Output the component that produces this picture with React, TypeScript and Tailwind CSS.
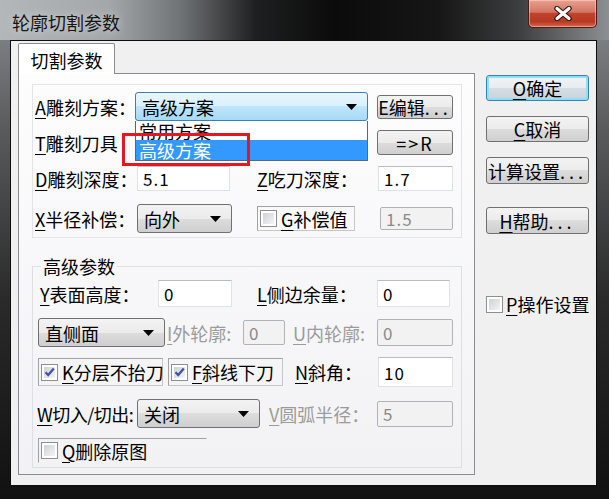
import React from "react";

const Acc = ({ k }: { k: string }) => (
  <span className="underline decoration-1 underline-offset-[3px]">{k}</span>
);

const Arrow = () => (
  <svg width="11" height="6" viewBox="0 0 11 6" className="shrink-0">
    <path d="M0 0h11L5.5 6z" fill="#000" />
  </svg>
);

const CheckBox = ({ checked }: { checked?: boolean }) => (
  <span className="flex h-[17px] w-[17px] shrink-0 items-center justify-center border border-[#8e8f8f] bg-white p-[2px]">
    <span className="flex h-full w-full items-center justify-center bg-[linear-gradient(135deg,#cfd1d3,#f4f4f4)]">
      {checked && (
        <svg width="11" height="10" viewBox="0 0 11 10">
          <path d="M1.5 5.2 4.2 8 9.8 1.5" fill="none" stroke="#3b53a0" strokeWidth="2.2" />
        </svg>
      )}
    </span>
  </span>
);

const grayBtn =
  "bg-[linear-gradient(to_bottom,#f3f3f3_0%,#ebebeb_50%,#dddddd_50%,#cfcfcf_100%)] border-[#707070]";

const Btn = ({ className, children, def }: { className: string; children: React.ReactNode; def?: boolean }) => (
  <div
    className={
      "flex items-center justify-center overflow-hidden whitespace-nowrap rounded-[3px] border " +
      (def
        ? "border-[#3c7fb1] bg-[linear-gradient(to_bottom,#f1f4f6_0%,#e7ecef_50%,#d5dee4_50%,#c9d3da_100%)] shadow-[inset_0_0_0_2px_#8fe0f7] "
        : grayBtn + " ") +
      className
    }
  >
    {children}
  </div>
);

const Dots = () => <span className="tracking-[4px]">...</span>;

const Input = ({ className, value, disabled }: { className: string; value: string; disabled?: boolean }) => (
  <div
    className={
      "flex items-center pl-[5px] text-[17px] " +
      (disabled
        ? "rounded-[2px] border border-[#b0b3b6] bg-[#f2f2f3] text-[#8a8a8a] "
        : "border border-[#dfe2e7] border-t-[#b9bcc2] bg-white text-black ") +
      className
    }
  >
    <span className="tracking-[1px]">{value}</span>
  </div>
);

const Combo = ({ className, text, focused }: { className: string; text: string; focused?: boolean }) => (
  <div
    className={
      "flex items-center justify-between rounded-[3px] border pl-[6px] pr-[10px] " +
      (focused
        ? "border-[#3c7fb1] bg-[linear-gradient(to_bottom,#eaf6fd_0%,#d9f0fc_50%,#bee6fd_50%,#a7d9f5_100%)] "
        : grayBtn + " ") +
      className
    }
  >
    <span>{text}</span>
    <Arrow />
  </div>
);

const Label = ({ k, text, className, disabled }: { k: string; text: string; className: string; disabled?: boolean }) => (
  <div className={"flex items-center whitespace-nowrap " + (disabled ? "text-[#9b9b9b] " : "text-black ") + className}>
    <Acc k={k} />
    {text}
  </div>
);

const CheckGroup = ({ k, text, checked, className }: { k: string; text: string; checked?: boolean; className: string }) => (
  <div
    className={
      "flex items-center gap-[4px] whitespace-nowrap border border-[#c6c6c6] border-l-[#a2a2a2] border-t-[#a2a2a2] pl-[2px] " +
      className
    }
  >
    <CheckBox checked={checked} />
    <span>
      <Acc k={k} />
      {text}
    </span>
  </div>
);

export default function App() {
  return (
    <div className="flex h-[499px] w-[609px] flex-col overflow-hidden bg-[linear-gradient(to_bottom,#8b8e91,#5a5c5e_25%,#2a2a2a_60%,#111111)] font-['Noto_Sans_CJK_SC','Noto_Sans',sans-serif] text-[18px] leading-none text-black">
      {/* title bar */}
      <div className="flex h-[40px] shrink-0 items-start justify-between bg-[linear-gradient(to_right,#b3b7ba_0%,#a3a7aa_18%,#6e7174_30%,#1e1f20_42%,#0b0b0b_55%,#161616_72%,#3c3d3e_85%,#8d9093_100%)]">
        <div className="ml-[12px] mt-[13px] text-[18px] text-[#141414] [text-shadow:0_0_8px_rgba(255,255,255,0.6)]">
          轮廓切割参数
        </div>
        <div className="mr-[12px] flex h-[28px] w-[69px] items-center justify-center rounded-b-[5px] border border-t-0 border-[#4a1a14] bg-[linear-gradient(to_bottom,#e8a190_0%,#d47563_45%,#c0432d_50%,#b63a22_80%,#d5674d_100%)] shadow-[inset_0_0_0_1px_rgba(255,220,210,0.5)]">
          <svg width="18" height="15" viewBox="0 0 18 15">
            <path d="M3 2.5 15 12.5M15 2.5 3 12.5" stroke="#3a1410" strokeWidth="5.5" strokeLinecap="round" />
            <path d="M3 2.5 15 12.5M15 2.5 3 12.5" stroke="#ffffff" strokeWidth="3.2" strokeLinecap="round" />
          </svg>
        </div>
      </div>

      {/* client area */}
      <div className="flex flex-1 pb-[13px] pl-[10px] pr-[12px]">
        <div className="flex flex-1 border border-[#0d0d0d] bg-[#f0f0f1]">
          {/* tab control */}
          <div className="ml-[7px] mt-[2px] flex w-[457px] flex-col">
            <div className="relative z-10 flex h-[31px] w-[97px] items-center justify-center rounded-t-[2px] border border-b-0 border-[#898c95] bg-white pt-[2px]">
              切割参数
            </div>
            <div className="-mt-px flex h-[402px] flex-col border border-[#898c95] bg-[linear-gradient(to_bottom,#fdfdfe,#f2f2f4)] pl-[13px] pt-[10px]">
              {/* group 1 */}
              <div className="flex h-[154px] w-[430px] flex-col border border-[#e2e4e8] pl-[2px] pt-[7px]">
                <div className="flex h-[29px] items-center">
                  <Label k="A" text="雕刻方案：" className="w-[100px]" />
                  <div className="relative">
                    <Combo className="h-[29px] w-[233px]" text="高级方案" focused />
                    <div className="absolute left-0 top-full z-20 flex h-[40px] w-[233px] flex-col border border-t-0 border-[#646464] bg-white">
                      <div className="flex h-[19px] items-end pl-[3px]">常用方案</div>
                      <div className="flex h-[20px] items-center bg-[#3399ff] pl-[3px] text-white">高级方案</div>
                    </div>
                    <div className="absolute left-[-13px] top-[41px] z-30 h-[33px] w-[128px] border-[3px] border-[#e5181f]" />
                  </div>
                  <Btn className="ml-[9px] h-[24px] w-[76px]">
                    <Acc k="E" />
                    编辑
                    <Dots />
                  </Btn>
                </div>
                <div className="mt-[9px] flex h-[25px] items-center">
                  <Label k="T" text="雕刻刀具" className="w-[100px]" />
                  <Combo className="h-[25px] w-[233px]" text="" />
                  <Btn className="ml-[9px] h-[25px] w-[76px] tracking-[2px]">
                    =&gt;
                    <Acc k="R" />
                  </Btn>
                </div>
                <div className="mt-[11px] flex h-[25px] items-center">
                  <Label k="D" text="雕刻深度：" className="w-[102px]" />
                  <Input className="h-[25px] w-[93px]" value="5.1" />
                  <Label k="Z" text="吃刀深度：" className="ml-[27px] w-[121px]" />
                  <Input className="h-[25px] w-[75px]" value="1.7" />
                </div>
                <div className="mt-[13px] flex h-[29px] items-center">
                  <Label k="X" text="半径补偿：" className="w-[102px]" />
                  <Combo className="h-[29px] w-[95px]" text="向外" />
                  <CheckGroup k="G" text="补偿值" className="ml-[25px] h-[25px] w-[98px]" />
                  <Input className="ml-[25px] h-[23px] w-[73px]" value="1.5" disabled />
                </div>
              </div>

              {/* group 2 */}
              <fieldset className="mt-[19px] h-[211px] w-[430px] border border-[#dcdfe4]">
                <legend className="ml-[8px] px-[2px]">高级参数</legend>
                <div className="mt-[5px] flex h-[27px] items-center">
                  <Label k="Y" text="表面高度：" className="ml-[7px] w-[118px]" />
                  <Input className="h-[27px] w-[74px]" value="0" />
                  <Label k="L" text="侧边余量：" className="ml-[25px] w-[120px]" />
                  <Input className="h-[27px] w-[73px]" value="0" />
                </div>
                <div className="mt-[11px] flex h-[29px] items-center">
                  <Combo className="ml-[5px] h-[29px] w-[127px]" text="直侧面" />
                  <Label k="I" text="外轮廓:" className="ml-[2px] w-[76px]" disabled />
                  <Input className="h-[25px] w-[42px]" value="0" disabled />
                  <Label k="U" text="内轮廓:" className="ml-[8px] w-[84px]" disabled />
                  <Input className="h-[27px] w-[76px]" value="0" disabled />
                </div>
                <div className="mt-[10px] flex h-[30px] items-center">
                  <CheckGroup k="K" text="分层不抬刀" checked className="ml-[5px] h-[28px] w-[125px]" />
                  <CheckGroup k="F" text="斜线下刀" checked className="ml-[5px] h-[28px] w-[115px]" />
                  <Label k="N" text="斜角：" className="ml-[12px] w-[83px]" />
                  <Input className="h-[30px] w-[75px]" value="10" />
                </div>
                <div className="mt-[12px] flex h-[29px] items-center">
                  <Label k="W" text="切入/切出:" className="ml-[4px] w-[100px] tracking-[-0.5px]" />
                  <Combo className="h-[29px] w-[123px]" text="关闭" />
                  <Label k="V" text="圆弧半径：" className="ml-[9px] w-[108px]" disabled />
                  <Input className="h-[26px] w-[76px]" value="5" disabled />
                </div>
                <div className="mt-[10px] flex h-[25px] items-center">
                  <CheckGroup k="Q" text="删除原图" className="ml-[5px] h-[25px] w-[169px] border-r-transparent border-b-transparent" />
                </div>
              </fieldset>
            </div>
          </div>

          {/* right buttons */}
          <div className="ml-[11px] mt-[34px] flex w-[103px] flex-col">
            <Btn def className="h-[26px] w-[103px]">
              <Acc k="O" />
              确定
            </Btn>
            <Btn className="mt-[15px] h-[26px] w-[103px]">
              <Acc k="C" />
              取消
            </Btn>
            <Btn className="mt-[15px] h-[27px] w-[103px]">
              计算设置
              <Dots />
            </Btn>
            <Btn className="mt-[23px] h-[27px] w-[103px]">
              <Acc k="H" />
              帮助
              <Dots />
            </Btn>
            <div className="mt-[61px] flex items-center gap-[3px] whitespace-nowrap">
              <CheckBox />
              <span>
                <Acc k="P" />
                操作设置
              </span>
            </div>
          </div>
        </div>
      </div>
    </div>
  );
}
